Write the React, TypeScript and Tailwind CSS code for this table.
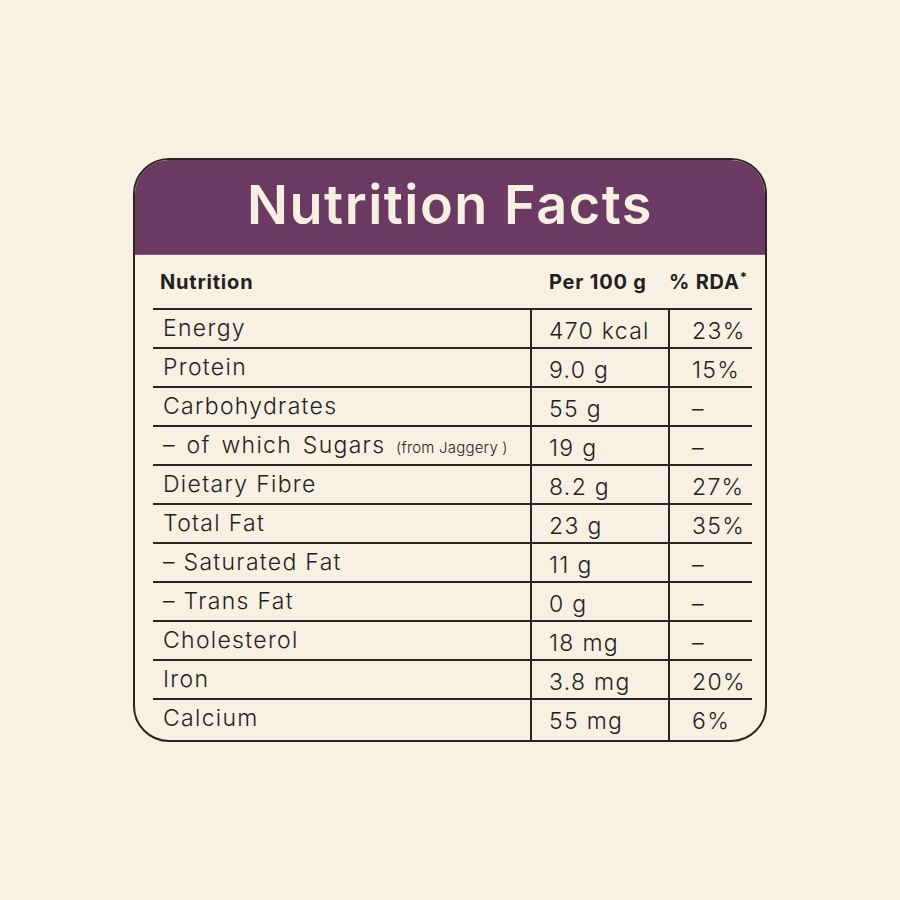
const rows = [
  { label: 'Energy', value: '470 kcal', rda: '23%' },
  { label: 'Protein', value: '9.0 g', rda: '15%' },
  { label: 'Carbohydrates', value: '55 g', rda: '–' },
  { label: 'sugars', value: '19 g', rda: '–' },
  { label: 'Dietary Fibre', value: '8.2 g', rda: '27%' },
  { label: 'Total Fat', value: '23 g', rda: '35%' },
  { label: '– Saturated Fat', value: '11 g', rda: '–' },
  { label: '– Trans Fat', value: '0 g', rda: '–' },
  { label: 'Cholesterol', value: '18 mg', rda: '–' },
  { label: 'Iron', value: '3.8 mg', rda: '20%' },
  { label: 'Calcium', value: '55 mg', rda: '6%' },
];

export default function App() {
  return (
    <div className="w-[900px] h-[900px] bg-[#f7f0e3] flex items-center justify-center font-['Inter',sans-serif] text-[#231f20]">
      <div className="w-[634px] h-[584px] border-2 border-[#2a2523] rounded-[36px] overflow-hidden flex flex-col">
        {/* Header */}
        <div className="h-[95px] bg-[#6b3a63] border-b border-[#8a5a80] flex items-center justify-center">
          <h1 className="text-[54px] font-semibold text-[#f7efe2] tracking-[1.5px] leading-none pb-1">Nutrition Facts</h1>
        </div>

        <div className="flex-1 flex flex-col pl-[18px] pr-[13px]">
          {/* Column heads */}
          <div className="h-[53px] grid grid-cols-[377px_138px_84px] items-center text-[20px] font-bold tracking-[0.8px]">
            <div className="pl-[7px]">Nutrition</div>
            <div className="pl-[19px] whitespace-nowrap">Per 100 g</div>
            <div className="pl-[1px] whitespace-nowrap">
              % RDA<sup className="text-[13px] -top-[0.5em]">*</sup>
            </div>
          </div>

          {rows.map((r, i) => (
            <div
              key={r.label}
              className={`grid grid-cols-[377px_138px_84px] border-t-2 border-[#2a2523] text-[23px] font-light tracking-[1.3px] ${
                i === rows.length - 1 ? 'flex-1' : 'h-[39px]'
              }`}
            >
              <div className="pl-[10px] pt-[1px] whitespace-nowrap">
                {r.label === 'sugars' ? (
                  <span className="[word-spacing:3px]">
                    – of which Sugars <span className="text-[15px] tracking-[0.2px] [word-spacing:0px]">(from Jaggery )</span>
                  </span>
                ) : (
                  r.label
                )}
              </div>
              <div className="border-l-2 border-[#2a2523] pl-[17px] pt-[4px] whitespace-nowrap">{r.value}</div>
              <div className="border-l-2 border-[#2a2523] pl-[22px] pt-[4px]">{r.rda}</div>
            </div>
          ))}
        </div>
      </div>
    </div>
  );
}
